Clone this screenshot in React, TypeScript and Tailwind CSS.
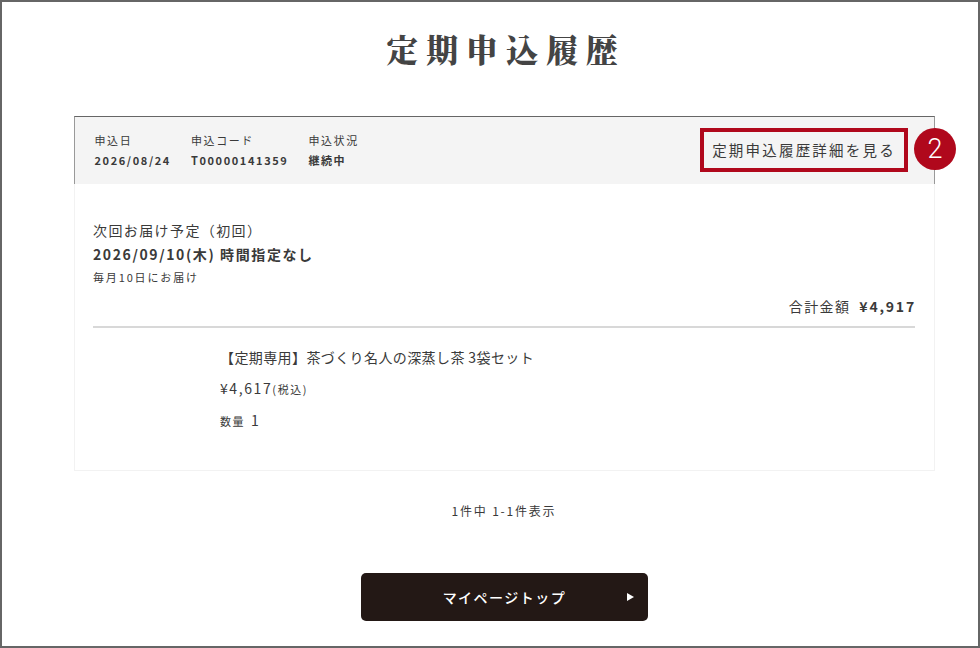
export default function App() {
  const sans = { fontFamily: '"Noto Sans CJK JP", "Noto Sans", sans-serif' };
  return (
    <div style={sans} className="relative w-[980px] h-[648px] overflow-hidden bg-white border-2 border-[#666666] text-[#3a3a3a]">
      <h1 className="mt-[22px] h-[48px] text-center text-[32px] leading-[48px] font-black tracking-[7.9px] text-[#444444] pl-[32px]" style={{ fontFamily: '"Noto Serif CJK JP", "Noto Sans CJK JP", serif' }}>定期申込履歴</h1>

      <div className="mt-[44px] ml-[72px] w-[861px] h-[355px] flex flex-col border border-t-0 border-[#f2f2f2]">
        <div className="relative -mx-px h-[68px] shrink-0 flex justify-between bg-[#f4f4f4] border border-b-0 border-[#999999] border-t-[#666666] pl-[19.5px] pr-[26px]">
          <div className="flex pt-[13px] gap-[20px] text-[11px] leading-[20px] tracking-[1.6px]">
            <div className="flex flex-col">
              <span>申込日</span>
              <span className="font-bold">2026/08/24</span>
            </div>
            <div className="flex flex-col">
              <span>申込コード</span>
              <span className="font-bold">T00000141359</span>
            </div>
            <div className="flex flex-col">
              <span>申込状況</span>
              <span className="font-bold">継続中</span>
            </div>
          </div>
          <div className="mt-[11px] w-[208px] h-[44px] flex items-center justify-center border-[4px] border-[#b0081c] text-[14.5px] tracking-[2.2px]">定期申込履歴詳細を見る</div>
          <div className="absolute left-[839px] top-[11px] w-[42px] h-[42px] rounded-full bg-[#b0081c] text-white flex items-center justify-center text-[27px] font-light leading-none" style={{ fontFamily: 'Roboto, "Liberation Sans", sans-serif' }}>2</div>
        </div>

        <div className="pl-[18px] pr-[19px] pt-[34px]">
          <div className="text-[14px] leading-[24px] tracking-[1.4px]">次回お届け予定（初回）</div>
          <div className="text-[14px] leading-[25px] font-bold tracking-[1.6px]">2026/09/10(木) 時間指定なし</div>
          <div className="mt-[1px] text-[11px] leading-[18px] tracking-[1.85px]">毎月10日にお届け</div>
          <div className="mt-[8px] -mr-[1px] flex justify-end gap-[9px] text-[14px] leading-[24px] tracking-[1.8px]"><span className="tracking-[1.4px]">合計金額</span><span className="font-bold">¥4,917</span></div>
          <div className="mt-[8px] h-[2px] bg-[#d8d8d8]"></div>
          <div className="pl-[127px] pt-[17px]">
            <div className="text-[14px] leading-[24px] tracking-[0.4px]">【定期専用】茶づくり名人の深蒸し茶 3袋セット</div>
            <div className="mt-[8px] text-[14px] leading-[22px] tracking-[1.6px]">¥4,617<span className="text-[11px]">(税込)</span></div>
            <div className="mt-[9px] text-[14px] leading-[22px] tracking-[1.6px]"><span className="text-[11px]">数量</span> <span className="ml-[1px]">1</span></div>
          </div>
        </div>
      </div>

      <div className="mt-[30px] pl-[28px] text-center text-[12px] leading-[20px] tracking-[1.8px]">1件中 1-1件表示</div>

      <div className="relative mt-[52px] ml-[359px] w-[287px] h-[48px] rounded-[5px] bg-[#231815] text-white flex items-center justify-center">
        <span className="text-[14px] font-medium tracking-[1.5px]">マイページトップ</span>
        <svg className="absolute left-[265px] top-[19px]" width="9" height="10" viewBox="0 0 9 10"><path d="M1 1 L8 5 L1 9 Z" fill="#ffffff" /></svg>
      </div>
    </div>
  );
}
